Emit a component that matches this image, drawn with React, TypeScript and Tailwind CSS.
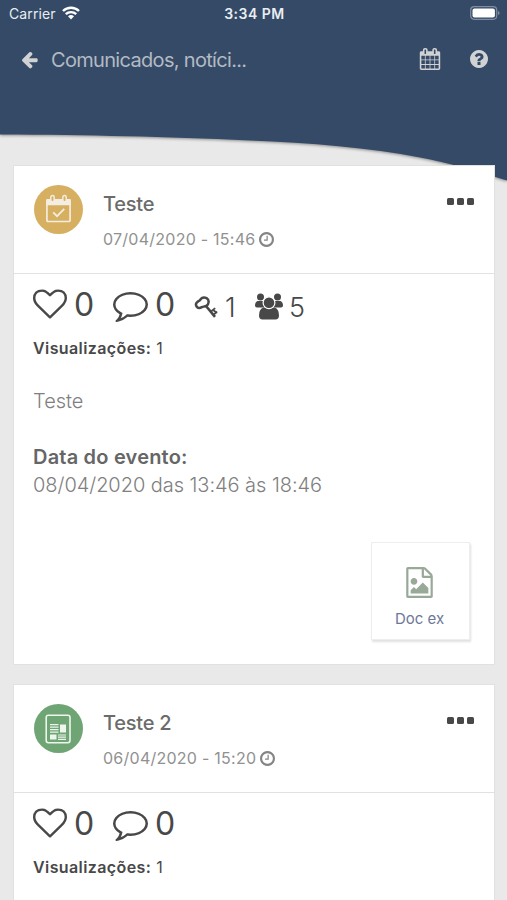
import React from "react";

type IconProps = { className?: string };

const makeIcon = (d: string, viewBox = "0 0 1792 1792") =>
  function Icon({ className = "" }: IconProps) {
    return (
      <svg viewBox={viewBox} fill="currentColor" className={`block shrink-0 ${className}`} aria-hidden="true">
        <path d={d} />
      </svg>
    );
  };

const ArrowLeft = makeIcon(
  "M1664 896v128q0 53-32.5 90.5t-84.5 37.5h-704l293 294q38 36 38 90t-38 90l-75 76q-37 37-90 37-52 0-91-37l-651-652q-37-37-37-90 0-52 37-91l651-650q38-38 91-38 52 0 90 38l75 74q38 38 38 91t-38 91l-293 293h704q52 0 84.5 37.5t32.5 90.5z"
);
const Calendar = makeIcon(
  "M192 1664h288v-288h-288v288zm352 0h320v-288h-320v288zm-352-352h288v-320h-288v320zm352 0h320v-320h-320v320zm-352-384h288v-288h-288v288zm736 736h320v-288h-320v288zm-384-736h320v-288h-320v288zm768 736h288v-288h-288v288zm-384-352h320v-320h-320v320zm-352-864v-288q0-13-9.5-22.5t-22.5-9.5h-64q-13 0-22.5 9.5t-9.5 22.5v288q0 13 9.5 22.5t22.5 9.5h64q13 0 22.5-9.5t9.5-22.5zm736 864h288v-320h-288v320zm-384-384h320v-288h-320v288zm384 0h288v-288h-288v288zm32-480v-288q0-13-9.5-22.5t-22.5-9.5h-64q-13 0-22.5 9.5t-9.5 22.5v288q0 13 9.5 22.5t22.5 9.5h64q13 0 22.5-9.5t9.5-22.5zm384-64v1280q0 52-38 90t-90 38h-1408q-52 0-90-38t-38-90v-1280q0-52 38-90t90-38h128v-96q0-66 47-113t113-47h64q66 0 113 47t47 113v96h384v-96q0-66 47-113t113-47h64q66 0 113 47t47 113v96h128q52 0 90 38t38 90z"
);
const Question = makeIcon(
  "M1024 1376v-192q0-14-9-23t-23-9h-192q-14 0-23 9t-9 23v192q0 14 9 23t23 9h192q14 0 23-9t9-23zm256-672q0-88-55.5-163t-138.5-116-170-41q-243 0-371 213-15 24 8 42l132 100q7 6 19 6 16 0 25-12 53-68 86-92 34-24 86-24 48 0 85.5 26t37.5 59q0 38-20 61t-68 45q-63 28-115.5 86.5t-52.5 125.5v36q0 14 9 23t23 9h192q14 0 23-9t9-23q0-19 21.5-49.5t54.5-49.5q32-18 49-28.5t46-35 44.5-48 28-60.5 12.5-81zm384 192q0 209-103 385.5t-279.5 279.5-385.5 103-385.5-103-279.5-279.5-103-385.5 103-385.5 279.5-279.5 385.5-103 385.5 103 279.5 279.5 103 385.5z",
  "128 128 1536 1536"
);
const Clock = makeIcon(
  "M1024 544v448q0 14-9 23t-23 9h-320q-14 0-23-9t-9-23v-64q0-14 9-23t23-9h224v-352q0-14 9-23t23-9h64q14 0 23 9t9 23zm416 352q0-148-73-273t-198-198-273-73-273 73-198 198-73 273 73 273 198 198 273 73 273-73 198-198 73-273zm224 0q0 209-103 385.5t-279.5 279.5-385.5 103-385.5-103-279.5-279.5-103-385.5 103-385.5 279.5-279.5 385.5-103 385.5 103 279.5 279.5 103 385.5z",
  "128 128 1536 1536"
);
const Heart = makeIcon(
  "M1664 596q0-81-21.5-143t-55-98.5-81.5-59.5-94-31-98-8-112 25.5-110.5 64-86.5 72-60 61.5q-18 22-49 22t-49-22q-24-28-60-61.5t-86.5-72-110.5-64-112-25.5-98 8-94 31-81.5 59.5-55 98.5-21.5 143q0 168 187 355l581 560 580-559q188-188 188-356zm128 0q0 221-229 450l-623 600q-18 18-44 18t-44-18l-624-602q-10-8-27.5-26t-55.5-65.5-68-97.5-53.5-121-23.5-138q0-220 127-344t351-124q62 0 126.5 21.5t120 58 95.5 68.5 76 68q36-36 76-68t95.5-68.5 120-58 126.5-21.5q224 0 351 124t127 344z"
);
const Comment = makeIcon(
  "M896 384q-204 0-381.5 69.5t-282 187.5-104.5 255q0 112 71.5 213.5t201.5 175.5l87 50-27 96q-24 91-70 172 152-63 275-171l43-38 57 6q69 8 130 8 204 0 381.5-69.5t282-187.5 104.5-255-104.5-255-282-187.5-381.5-69.5zm896 512q0 174-120 321.5t-326 233-450 85.5q-70 0-145-8-198 175-460 242-49 14-114 22h-5q-15 0-27-10.5t-16-27.5v-1q-3-4-.5-12t2-10 4.5-9.5l6-9 7-8.5 8-9q7-8 31-34.5t34.5-38 31-39.5 32.5-51 27-59 26-76q-157-89-247.5-220t-90.5-281q0-174 120-321.5t326-233 450-85.5 450 85.5 326 233 120 321.5z"
);
const FileImage = makeIcon(
  "M1596 380q28 28 48 76t20 88v1152q0 40-28 68t-68 28h-1344q-40 0-68-28t-28-68v-1600q0-40 28-68t68-28h896q40 0 88 20t76 48zm-444-244v376h376q-10-29-22-41l-313-313q-12-12-41-22zm384 1528v-1024h-416q-40 0-68-28t-28-68v-416h-768v1536h1280zm-128-448v320h-1024v-192l192-192 128 128 384-384zm-832-192q-80 0-136-56t-56-136 56-136 136-56 136 56 56 136-56 136-136 56z",
  "128 0 1536 1792"
);

function Key({ className = "" }: IconProps) {
  return (
    <svg viewBox="0 0 24 22" className={`block shrink-0 ${className}`} fill="none" stroke="currentColor" aria-hidden="true">
      <path d="M2.600 10.500C.6 7.500 3.600 5.300 5.800 4.300 7.300 2 10 .9 12.600 2.200c3 1.700 2.500 6-.2 7.700-1.800 1.100-3.200.4-4.600 1.200-1.700 1.300-4 1.300-5.200-.6z" strokeWidth="2.500" />
      <path d="m12 10 9 10.800" strokeWidth="2.600" />
      <path d="m17 15.500 4.200-3.400M19.800 18.500l3.400-2.900M18.500 13.500l4.500 3.500" strokeWidth="1.700" />
    </svg>
  );
}

function Group({ className = "" }: IconProps) {
  return (
    <svg viewBox="0 0 28 27" className={`block shrink-0 ${className}`} fill="currentColor" aria-hidden="true">
      <circle cx="5.500" cy="3.900" r="3.500" />
      <circle cx="22.500" cy="3.900" r="3.500" />
      <path d="M2.500 8h5.500l1.500 6.500H2q-2 0-2-2Q0 9 2.500 8zM25.500 8H20l-1.500 6.500H26q2 0 2-2Q28 9 25.500 8z" />
      <path d="M8.500 14.600h11q4.500 1.300 4.500 8 0 3.900-3.600 3.900H7.600Q4 26.500 4 22.600q0-6.700 4.500-8z" />
      <circle cx="14" cy="9.700" r="5.900" stroke="white" strokeWidth="1.200" />
    </svg>
  );
}

function EventIcon() {
  return (
    <svg viewBox="0 0 28 30" className="mb-[2px] mr-px h-[29px] w-[27px]" fill="none" stroke="#f4eee2" aria-hidden="true">
      <rect x="2" y="7" width="24" height="21.500" rx="1" strokeWidth="1.700" />
      <path d="M1.200 6.200q0-1 1-1h23.600q1 0 1 1v5.500H1.200z" fill="#f4eee2" stroke="none" />
      <rect x="6" y="1.500" width="3.500" height="6.500" rx="1.700" fill="#d6b060" strokeWidth="1.500" />
      <rect x="18.500" y="1.500" width="3.500" height="6.500" rx="1.700" fill="#d6b060" strokeWidth="1.500" />
      <path d="m8.500 19 4 4 7.500-7.500" strokeWidth="1.800" />
    </svg>
  );
}

function NewsIcon() {
  return (
    <svg viewBox="0 0 28 30" className="mr-[2px] h-[30px] w-7" fill="none" stroke="#edf5ec" aria-hidden="true">
      <rect x="2.200" y="1.200" width="23.800" height="27.600" rx="2.200" strokeWidth="1.600" />
      <path d="M6 10.700h8.500M6 13.200h8.500M6 15.700h8.500M6 18.200h8.500M14 21h8M14 23.200h8M14 25.400h8" strokeWidth="1.200" />
      <path d="M16 10.500h6v8h-6zM6 20.500h6.500v5H6z" fill="#edf5ec" stroke="none" />
    </svg>
  );
}

function StatusBar() {
  return (
    <div className="grid h-7 grid-cols-[1fr_auto_1fr] items-center pl-[9px] pr-[7px] leading-7 text-[#e9edf2]">
      <div className="flex items-center gap-[6px]">
        <span className="text-[14px] tracking-[0.1px]">Carrier</span>
        <svg viewBox="0 0 18 14" className="mb-[2px] h-[14px] w-[18px]" fill="none" stroke="white" strokeWidth="2.400" aria-hidden="true">
          <path d="M1 5a11.500 11.500 0 0 1 16 0M3.800 8.200a7.500 7.500 0 0 1 10.400 0" />
          <path d="m9 13.500 3-3.200a4.400 4.400 0 0 0-6 0z" fill="white" stroke="none" />
        </svg>
      </div>
      <span className="text-[14px] font-semibold tracking-[0.5px]">3:34 PM</span>
      <svg viewBox="0 0 30 14" className="mb-[2px] h-[14px] w-[30px] justify-self-end" aria-hidden="true">
        <rect x=".7" y=".7" width="26" height="12.600" rx="3.500" fill="none" stroke="#7f8da2" strokeWidth="1.200" />
        <rect x="2.500" y="2.400" width="22.400" height="9.200" rx="2" fill="white" />
        <path d="M28 5v4q1.600-.7 1.600-2T28 5z" fill="#7f8da2" />
      </svg>
    </div>
  );
}

function HeaderCurve() {
  return (
    <svg viewBox="0 0 507 190" className="absolute inset-x-0 top-0 h-[190px] w-full drop-shadow-[0_1px_1.5px_rgba(0,0,0,0.4)]" aria-hidden="true">
      <path d="M-5-5H512V182Q502 179 494 176.500C471 169 448 163 420 157.500C370 147.500 310 143 250 140.500C160 136.500 90 135 -5 134.500z" fill="#354a66" />
    </svg>
  );
}

type PostProps = {
  title: string;
  date: string;
  icon: React.ReactNode;
  color: string;
  stats?: React.ReactNode;
  children?: React.ReactNode;
  className: string;
};

function Post({ title, date, icon, color, stats, children, className }: PostProps) {
  return (
    <article className={`border border-[#e1e1e1] bg-white ${className}`}>
      <header className="flex h-[108px] border-b border-[#e1e1e1] px-5">
        <div className={`mt-[19px] flex size-[49px] shrink-0 items-center justify-center rounded-full ${color}`}>{icon}</div>
        <div className="ml-5 flex-1 pt-[26px]">
          <h2 className="text-[20px] font-medium leading-6 tracking-[-0.25px] text-[#6b6b6b]">{title}</h2>
          <p className="mt-[13px] flex items-center gap-1 text-[16px] leading-5 text-[#919191]">
            <span className="tracking-[0.25px]">{date}</span>
            <Clock className="size-[15px] text-[#858585]" />
          </p>
        </div>
        <div className="mt-8 flex h-[7px] gap-[3px]">
          <i className="size-[7px] rounded-[1.5px] bg-[#484848]" />
          <i className="size-[7px] rounded-[1.5px] bg-[#484848]" />
          <i className="size-[7px] rounded-[1.5px] bg-[#484848]" />
        </div>
      </header>
      <div className="pl-[19px] text-[#484848]">
        <div className="flex h-[60px] items-center">
          <Heart className="size-[34px]" />
          <span className="ml-[7px] mt-[2px] w-[21px] text-[32px] leading-none">0</span>
          <Comment className="ml-[18px] size-[35px]" />
          <span className="ml-[7px] mt-[2px] w-[21px] text-[32px] leading-none">0</span>
          {stats}
        </div>
        <p className="pt-[2px] text-[16px] leading-6 tracking-[0.4px]">
          <b className="font-semibold">Visualizações:</b> 1
        </p>
      </div>
      {children}
    </article>
  );
}

export default function App() {
  return (
    <div className="relative h-[900px] w-full overflow-hidden bg-[#e9e9e9] font-['Inter','Liberation_Sans',sans-serif]">
      <HeaderCurve />
      <div className="relative">
        <StatusBar />
        <nav className="flex h-[63px] items-center pl-5 pr-[19px] text-[#d0d2d4]">
          <ArrowLeft className="size-[19px]" />
          <h1 className="ml-3 flex-1 whitespace-nowrap text-[20px] tracking-[-0.68px] text-[#b3bac4]">Comunicados, notíci...</h1>
          <Calendar className="mb-[2px] size-[22px]" />
          <Question className="mb-px ml-[29px] size-[18px]" />
        </nav>
        <main className="ml-[13px] mr-3 flex flex-col gap-[19px] pt-[74px]">
          <Post
            title="Teste"
            date="07/04/2020 - 15:46"
            icon={<EventIcon />}
            color="bg-[#d6b060]"
            className="h-[500px]"
            stats={
              <>
                <Key className="ml-[18px] mt-[5px] h-[22px] w-[24px]" />
                <span className="ml-[7px] mt-[7px] w-[13px] text-[27px] font-light leading-none">1</span>
                <Group className="ml-[17px] mt-[5px] h-[27px] w-[28px]" />
                <span className="ml-[6px] mt-[7px] text-[27px] font-light leading-none">5</span>
              </>
            }
          >
            <div className="flex flex-col pl-[19px] pr-6 text-[20px] leading-7 text-[#808080]">
              <p className="mt-[27px] font-light">Teste</p>
              <p className="mt-7 font-semibold tracking-[0.2px] text-[#666]">Data do evento:</p>
              <p className="font-light tracking-[-0.05px]">08/04/2020 das 13:46 às 18:46</p>
              <div className="mt-[43px] flex h-[98px] w-[99px] flex-col items-center self-end border border-[#eeeeee] bg-white pt-6 pr-[2px] shadow-[1px_2px_2px_rgba(0,0,0,0.12)]">
                <FileImage className="h-[31px] w-[27px] text-[#98a998]" />
                <span className="mt-[9px] text-[15px] leading-6 text-[#6c7898]">Doc ex</span>
              </div>
            </div>
          </Post>
          <Post title="Teste 2" date="06/04/2020 - 15:20" icon={<NewsIcon />} color="bg-[#6fa575]" className="h-[300px]" />
        </main>
      </div>
    </div>
  );
}
